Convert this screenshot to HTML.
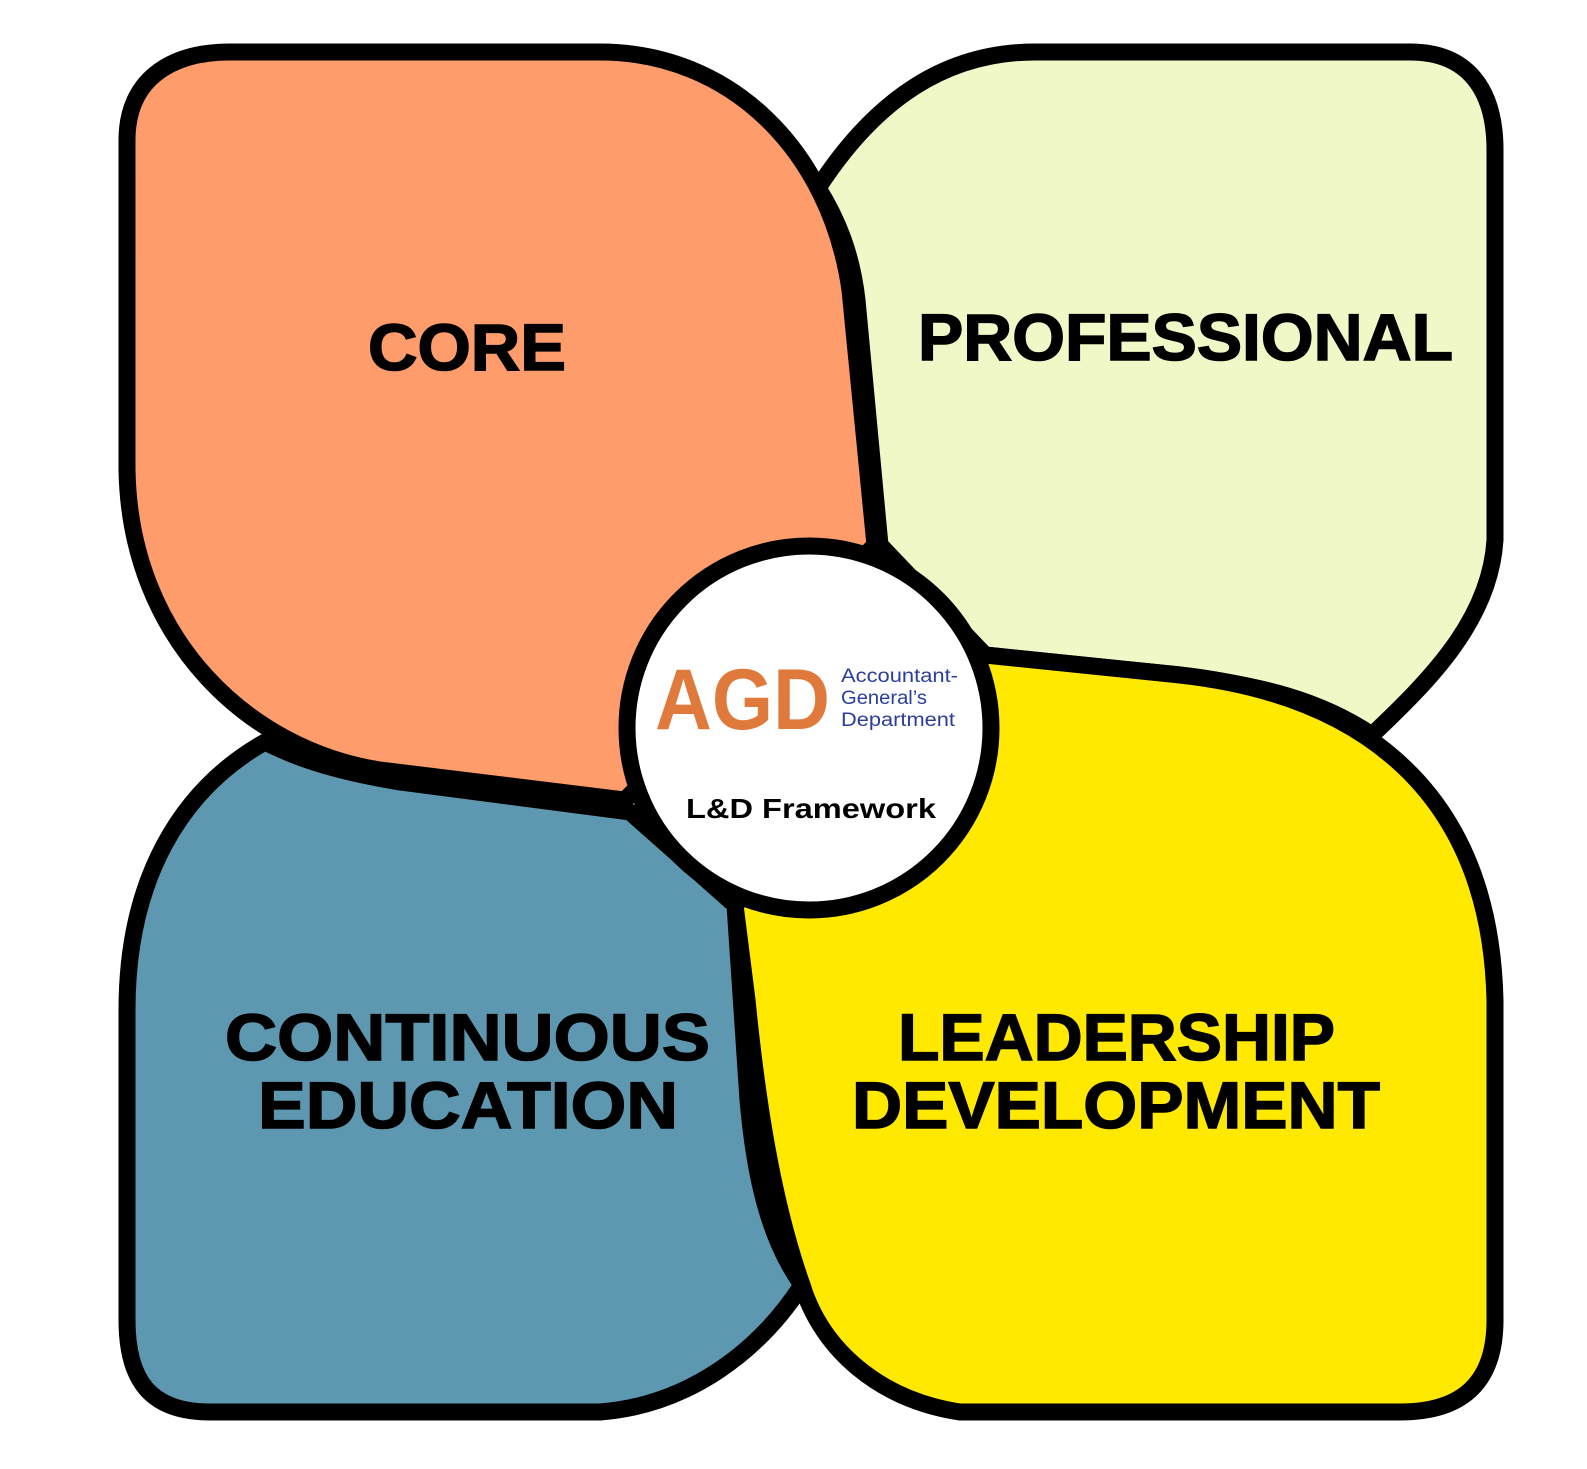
<!DOCTYPE html>
<html><head><meta charset="utf-8"><style>
html,body{margin:0;padding:0;background:#fff;}
svg{display:block;}
text{font-family:"Liberation Sans",sans-serif;font-weight:bold;}
.lbl{stroke:#000;stroke-width:1.5;}
</style></head><body>
<svg width="1587" height="1469" viewBox="0 0 1587 1469" xmlns="http://www.w3.org/2000/svg">
<g stroke="#000" stroke-width="17" stroke-linejoin="round">
<path fill="#FE9C6C" d="M600 52 C730 52 830 150 850 290 L875 545 L625 800 L380 770 C250 750 130 640 127 470 L127 140 C127 80 170 52 230 52 Z"/>
<path fill="#EFF8C6" d="M818 188 C875 100 945 52 1035 52 L1410 52 C1468 52 1495 90 1495 150 L1495 540 C1490 620 1430 680 1372 735 C1320 700 1260 685 1180 675 L985 655 L880 545 L857 300 C852 255 838 220 818 188 Z"/>
<path fill="#FFE900" d="M985 655 L1180 675 C1360 695 1490 790 1495 1000 L1495 1320 C1495 1380 1465 1412 1400 1412 L960 1412 C880 1400 822 1350 802 1285 C772 1200 757 1100 747 1000 L735 905 Z"/>
<path fill="#5E98B0" d="M265 742 C300 760 340 772 400 782 L630 812 L735 905 L748 1100 C755 1180 770 1240 802 1285 C760 1350 690 1405 600 1412 L210 1412 C150 1412 127 1380 127 1320 L127 1010 C127 880 180 790 265 742 Z"/>
<circle cx="809" cy="728" r="182" fill="#fff"/>
</g>
<text class="lbl" x="368" y="370" font-size="66" textLength="198" lengthAdjust="spacingAndGlyphs">CORE</text>
<text class="lbl" x="918" y="360" font-size="66" textLength="535" lengthAdjust="spacingAndGlyphs">PROFESSIONAL</text>
<text class="lbl" x="225" y="1060" font-size="66" textLength="485" lengthAdjust="spacingAndGlyphs">CONTINUOUS</text>
<text class="lbl" x="258" y="1128" font-size="66" textLength="420" lengthAdjust="spacingAndGlyphs">EDUCATION</text>
<text class="lbl" x="898" y="1060" font-size="66" textLength="437" lengthAdjust="spacingAndGlyphs">LEADERSHIP</text>
<text class="lbl" x="852" y="1128" font-size="66" textLength="528" lengthAdjust="spacingAndGlyphs">DEVELOPMENT</text>
<text x="655" y="729" font-size="86" fill="#E07A3C" textLength="175" lengthAdjust="spacingAndGlyphs">AGD</text>
<g fill="#2B3E9E" font-size="19">
<text x="841" y="682" style="font-weight:normal" textLength="117" lengthAdjust="spacingAndGlyphs">Accountant-</text>
<text x="841" y="704" style="font-weight:normal" textLength="86" lengthAdjust="spacingAndGlyphs">General’s</text>
<text x="841" y="726" style="font-weight:normal" textLength="114" lengthAdjust="spacingAndGlyphs">Department</text>
</g>
<text x="686" y="818" font-size="28" textLength="250" lengthAdjust="spacingAndGlyphs">L&amp;D Framework</text>
</svg>
</body></html>
